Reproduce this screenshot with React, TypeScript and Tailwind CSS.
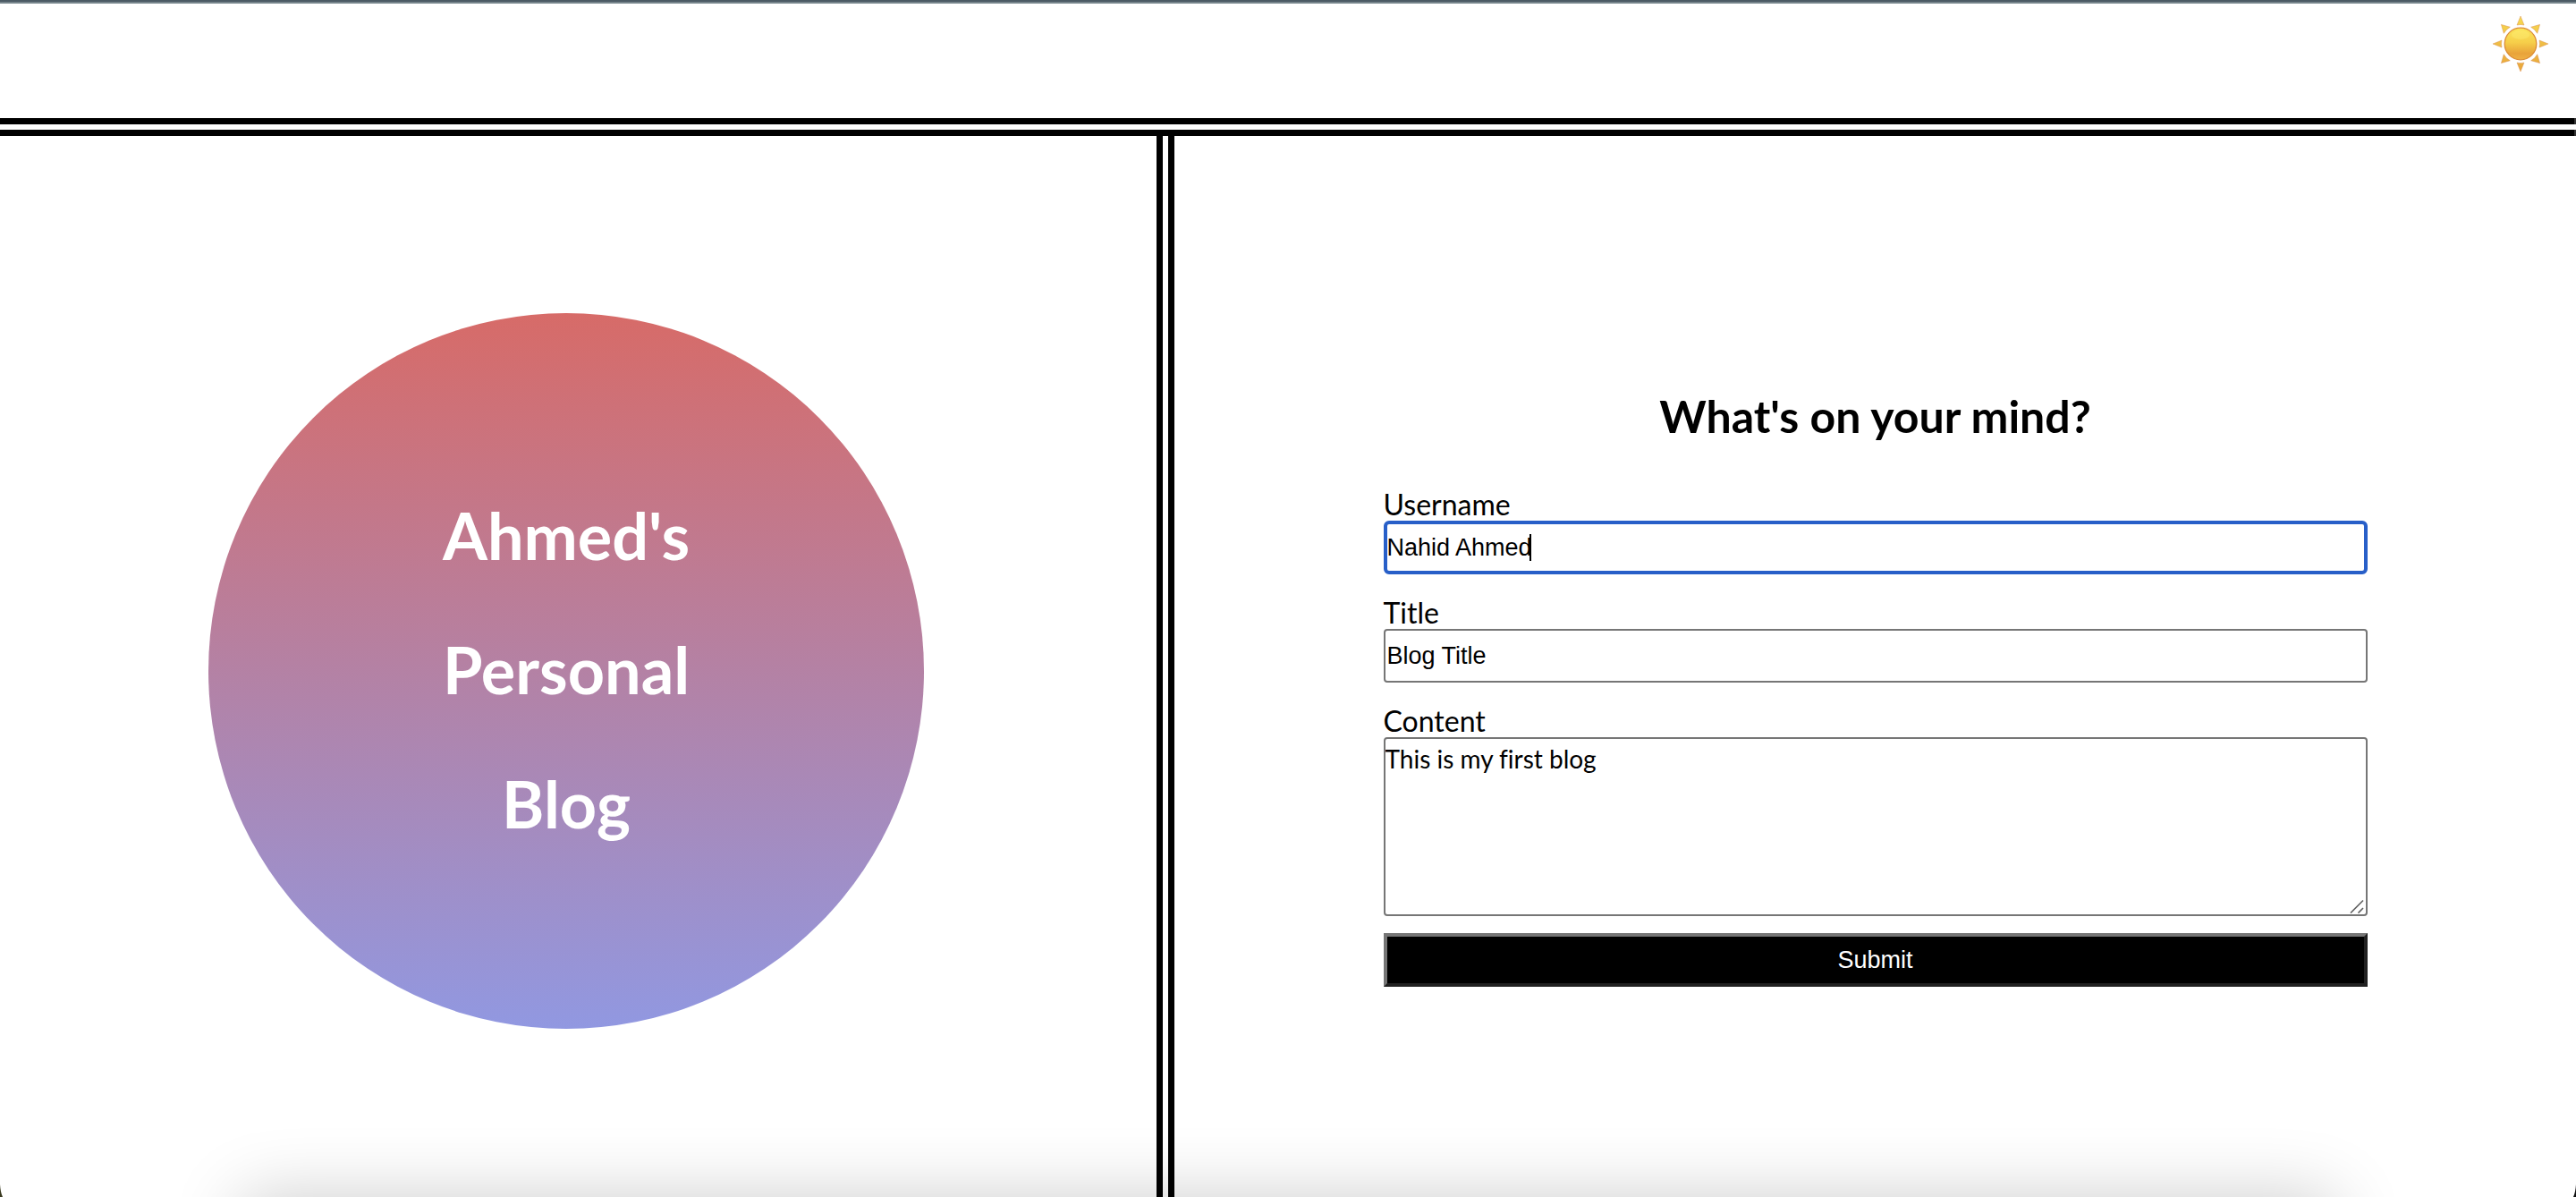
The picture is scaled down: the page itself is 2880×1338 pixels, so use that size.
import type { ReactNode } from "react";

const RAYS = [0, 45, 90, 135, 180, 225, 270, 315];

function Sun() {
  return (
    <svg viewBox="0 0 64 64" className="size-16" aria-hidden="true">
      <defs>
        <linearGradient id="sun-disc" x1="0" y1="0" x2="0" y2="1">
          <stop offset="0" stopColor="#fbe55c" />
          <stop offset="0.45" stopColor="#f6cf4a" />
          <stop offset="0.8" stopColor="#e9a33a" />
          <stop offset="1" stopColor="#eeb044" />
        </linearGradient>
        <linearGradient id="sun-rays" gradientUnits="userSpaceOnUse" x1="0" y1="0" x2="0" y2="64">
          <stop offset="0" stopColor="#f7dc50" />
          <stop offset="0.5" stopColor="#efbd45" />
          <stop offset="1" stopColor="#e8a53a" />
        </linearGradient>
        <mask id="sun-ray-mask">
          {RAYS.map((angle) => (
            <path
              key={angle}
              d={angle % 90 === 0 ? "M32 1 L36 11 Q32 10 28 11 Z" : "M32 1.5 L37 10.5 Q32 9 27 10.5 Z"}
              fill="#fff"
              transform={`rotate(${angle} 32 32)`}
            />
          ))}
        </mask>
      </defs>
      <rect width="64" height="64" fill="url(#sun-rays)" mask="url(#sun-ray-mask)" />
      {RAYS.map((angle) => (
        <path
          key={angle}
          d={angle % 90 === 0 ? "M32 1 L36 11 Q32 10 28 11 Z" : "M32 1.5 L37 10.5 Q32 9 27 10.5 Z"}
          fill="none"
          stroke="#d98a4a"
          strokeOpacity="0.55"
          strokeWidth="0.8"
          transform={`rotate(${angle} 32 32)`}
        />
      ))}
      <circle cx="32" cy="32" r="17.8" fill="url(#sun-disc)" stroke="#dc8c35" strokeWidth="1.3" />
      <ellipse cx="32" cy="22" rx="10" ry="5" fill="#fff27a" fillOpacity="0.35" />
    </svg>
  );
}

function Field({ id, label, children }: { id: string; label: string; children: ReactNode }) {
  return (
    <div className="flex flex-col">
      <label htmlFor={id} className="text-[32px] leading-[37px]">
        {label}
      </label>
      <div className="relative flex">{children}</div>
    </div>
  );
}

export default function App() {
  return (
    <div className="relative flex h-screen flex-col gap-[6px] overflow-hidden bg-white font-['Lato','Open_Sans',sans-serif] text-black">
      <header className="flex h-[139px] shrink-0 items-start justify-end border-b-7 border-black">
        <div className="absolute inset-x-0 top-0 h-1 border-b-2 border-[#76848b] bg-[#4b5a64]" />
        <button type="button" aria-label="Toggle theme" className="mt-[17px] mr-[30px]">
          <Sun />
        </button>
      </header>

      <main className="flex flex-1 gap-[6px] border-t-7 border-black">
        <section className="flex w-[45.14%] items-center justify-center border-r-7 border-black pt-[10px] pr-[27px]">
          <h1 className="flex size-[800px] flex-col items-center justify-center rounded-full bg-linear-to-b/srgb from-[#d76b68] to-[#9198e1] pb-1 text-7xl leading-[150px] font-bold text-white">
            <span>Ahmed's</span>
            <span>Personal</span>
            <span>Blog</span>
          </h1>
        </section>

        <section className="flex flex-1 items-center justify-center border-l-7 border-black pt-[10px]">
          <form className="flex w-[70.2%] flex-col" onSubmit={(e) => e.preventDefault()}>
            <h2 className="mt-[39px] mb-[51px] text-center text-[50px] leading-[58px] font-bold">What's on your mind?</h2>
            <div className="flex flex-col gap-6">
              <Field id="username" label="Username">
                <input
                  id="username"
                  type="text"
                  defaultValue="Nahid Ahmed"
                  className="h-[60px] w-full rounded-md border-4 border-[#285fc8] bg-white font-['Liberation_Sans',Arial,sans-serif] text-[27px] caret-transparent outline-none"
                />
                <span className="absolute top-[15px] left-[163px] h-[30px] w-[2px] bg-black" />
              </Field>
              <Field id="title" label="Title">
                <input
                  id="title"
                  type="text"
                  defaultValue="Blog Title"
                  className="h-[60px] w-full rounded border-2 border-[#767676] bg-white px-[2px] font-['Liberation_Sans',Arial,sans-serif] text-[27px] outline-none"
                />
              </Field>
              <Field id="content" label="Content">
                <textarea
                  id="content"
                  defaultValue="This is my first blog"
                  className="h-[200px] w-full resize-none rounded border-2 border-[#767676] bg-white pt-[6px] text-[28px] leading-[32px] outline-none [font-variant-ligatures:none]"
                />
                <svg viewBox="0 0 16 16" className="absolute right-1 bottom-[3px] size-4" aria-hidden="true">
                  <path d="M1 15.5 L15 1.5 M9.5 15.5 L15 10" fill="none" stroke="#5f5f5f" strokeWidth="1.6" />
                </svg>
              </Field>
            </div>
            <button
              type="submit"
              className="mt-[19px] h-[60px] border-4 border-t-[#767676] border-r-[#212121] border-b-[#212121] border-l-[#767676] bg-black font-['Liberation_Sans',Arial,sans-serif] text-[27px] text-white"
            >
              Submit
            </button>
          </form>
        </section>
      </main>

      <div className="pointer-events-none absolute inset-x-[270px] top-full h-40 shadow-[0_0_80px_rgba(0,0,0,0.2)]" />
      <div className="pointer-events-none absolute top-1 right-0 bottom-0 w-[2px] bg-white/20" />
      <svg viewBox="0 0 3 14" className="absolute bottom-0 left-0 h-[14px] w-[3px]" aria-hidden="true">
        <path d="M0 0 Q0.6 9 3 14 H0 Z" fill="#3a3a20" />
      </svg>
      <svg viewBox="0 0 3 14" className="absolute right-0 bottom-0 h-[14px] w-[3px]" aria-hidden="true">
        <path d="M3 0 Q2.4 9 0 14 H3 Z" fill="#111" />
      </svg>
    </div>
  );
}
